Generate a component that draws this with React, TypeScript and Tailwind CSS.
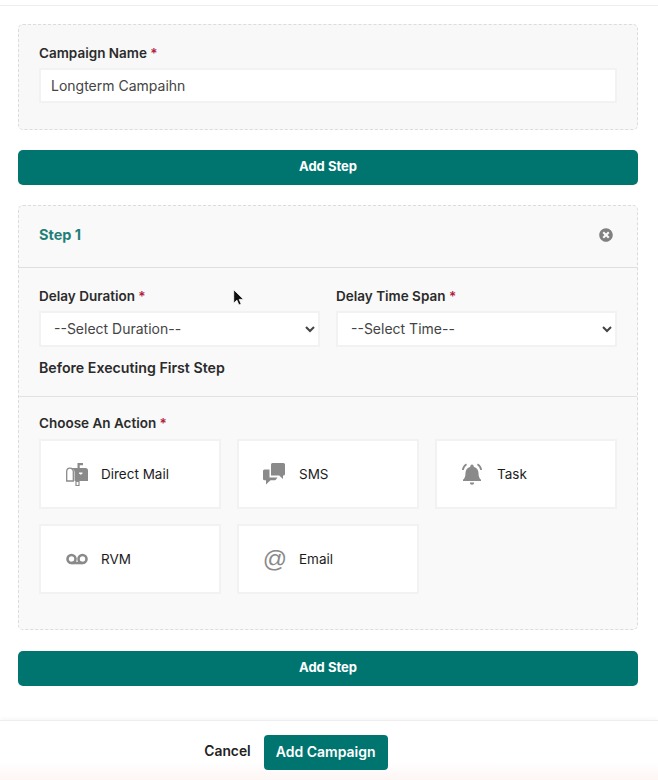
import React from "react";
import { FaTimesCircle } from "react-icons/fa";

const Star = () => <span className="text-[#b3183d]"> *</span>;

function Label({ children, required, size = "text-[13.5px]" }: { children: React.ReactNode; required?: boolean; size?: string }) {
  return (
    <div className={`${size} leading-[18px] font-semibold text-[#2b2b2b]`}>
      {children}
      {required && <Star />}
    </div>
  );
}

function AddStep({ extra = "" }: { extra?: string }) {
  return (
    <button className={`${extra} h-[35px] w-full rounded-[5px] bg-[#007570] pb-[2px] text-[13px] font-bold text-white`}>
      Add Step
    </button>
  );
}

function Mailbox() {
  return (
    <svg width="24" height="24" viewBox="0 0 24 24" className="text-[#8a8a8a]">
      <path fill="currentColor" d="M12.500 1h5.500v2.200h-3.300V6h-2.200z" />
      <path fill="currentColor" d="M6.500 6h14A2.500 2.500 0 0 1 23 8.500V19H9.500V10c0-1.800-1.200-3.300-3-4z" />
      <path fill="#fff" stroke="currentColor" strokeWidth="1.300" d="M1.700 19V9.500a3.300 3.300 0 0 1 6.600 0V19z" />
      <path fill="none" stroke="currentColor" strokeWidth="1.200" d="M11 19.500h3v4h-3z" />
      <path fill="#fff" d="M14 10.500h3.500v1l-1.750 1.200-1.750-1.200z" />
    </svg>
  );
}

function Sms() {
  return (
    <svg width="24" height="24" viewBox="0 0 24 24" className="-translate-x-[1px] text-[#8a8a8a]">
      <path fill="currentColor" d="M10.500 1h11A1.500 1.500 0 0 1 23 2.500v9.500a1.500 1.500 0 0 1-1.500 1.500H21V17l-3.800-3.500H9V2.500A1.500 1.500 0 0 1 10.500 1z" />
      <path fill="currentColor" d="M2.500 7.500H7.500V15.500H15.500L14 17.500a1.500 1.500 0 0 1-1.300.700H8.500L4 22.500V18.200H2.500A1.500 1.500 0 0 1 1 16.700V9a1.500 1.500 0 0 1 1.500-1.500z" />
    </svg>
  );
}

function Bell() {
  return (
    <svg width="24" height="24" viewBox="0 0 24 24" className="-translate-x-[1px] text-[#8a8a8a]">
      <path fill="currentColor" d="M12 2.500a1.700 1.700 0 0 1 1.700 1.700v.5c3 .8 4.800 3.300 4.800 6.300 0 3.800 1 5.300 2.500 6.800v1.200H3v-1.200c1.500-1.500 2.500-3 2.500-6.800 0-3 1.800-5.500 4.800-6.300v-.5A1.700 1.700 0 0 1 12 2.500z" />
      <path fill="currentColor" d="M9.800 20.500h4.400a2.200 2.200 0 0 1-4.400 0z" />
      <path fill="none" stroke="currentColor" strokeWidth="1.800" d="M6.500 2.200A8 8 0 0 0 2.800 8M17.500 2.200a8 8 0 0 1 3.700 5.800" />
    </svg>
  );
}

function Voicemail() {
  return (
    <svg width="24" height="12" viewBox="0 0 24 12" className="text-[#8a8a8a]">
      <circle cx="6.500" cy="6" r="4" fill="none" stroke="currentColor" strokeWidth="2.600" />
      <circle cx="17.500" cy="6" r="4" fill="none" stroke="currentColor" strokeWidth="2.600" />
      <path fill="none" stroke="currentColor" strokeWidth="2.600" d="M6.500 10.000h11" />
    </svg>
  );
}

function ActionCard({ icon, label }: { icon: React.ReactNode; label: string }) {
  return (
    <div className="flex h-[70px] items-center gap-[12px] border-2 border-[#f2f2f2] bg-white pl-[24px]">
      <span className="flex w-[24px] items-center justify-center">{icon}</span>
      <span className="text-[13.5px] text-[#1c1c1c]">{label}</span>
    </div>
  );
}

function SelectField({ label, placeholder }: { label: string; placeholder: string }) {
  return (
    <div className="flex flex-col gap-[6px]">
      <Label required>{label}</Label>
      <select className="h-[36px] w-full border-2 border-[#f2f2f2] bg-white pb-[2px] pl-[9px] text-[14px] text-[#444]">
        <option>{placeholder}</option>
      </select>
    </div>
  );
}

export default function App() {
  return (
    <div className="relative flex h-[780px] w-[658px] flex-col overflow-hidden bg-white font-['Inter','Noto_Sans',sans-serif]">
      <div className="h-[6px] shrink-0 border-b border-[#eeeeee]" />
      <main className="flex flex-col gap-[20px] pl-[18px] pr-[20px] pt-[18px]">
        <section className="h-[106px] rounded-[5px] border border-dashed border-[#dcdcdc] bg-[#f8f8f9] px-[20px] pt-[19px]">
          <Label required>Campaign Name</Label>
          <div className="mt-[6px] flex h-[35px] items-center border-2 border-[#f2f2f2] bg-white pb-[1px] pl-[10px] text-[14px] text-[#444]">
            Longterm Campaihn
          </div>
        </section>

        <AddStep />

        <section className="flex h-[425px] flex-col rounded-[5px] border border-dashed border-[#dcdcdc] bg-[#f9f9f9]">
          <header className="flex h-[62px] shrink-0 items-center justify-between border-b border-[#dfdfdf] pb-[4px] pl-[20px] pr-[24px]">
            <span className="text-[14.5px] font-bold text-[#1f7f78]">Step 1</span>
            <FaTimesCircle className="text-[14px] text-[#808080]" />
          </header>
          <div className="h-[129px] shrink-0 border-b border-[#e2e2e2] px-[20px] pt-[19px]">
            <div className="grid grid-cols-2 gap-[16px]">
              <SelectField label="Delay Duration" placeholder="--Select Duration--" />
              <SelectField label="Delay Time Span" placeholder="--Select Time--" />
            </div>
            <div className="mt-[12px]">
              <Label size="text-[14.2px]">Before Executing First Step</Label>
            </div>
          </div>
          <div className="px-[20px] pt-[17px]">
            <Label required>Choose An Action</Label>
            <div className="mt-[7px] grid grid-cols-3 gap-x-[16px] gap-y-[15px]">
              <ActionCard icon={<Mailbox />} label="Direct Mail" />
              <ActionCard icon={<Sms />} label="SMS" />
              <ActionCard icon={<Bell />} label="Task" />
              <ActionCard icon={<Voicemail />} label="RVM" />
              <ActionCard
                icon={<span className="font-['Liberation_Sans',sans-serif] text-[24px] leading-none text-[#8a8a8a]">@</span>}
                label="Email"
              />
            </div>
          </div>
        </section>

        <AddStep extra="mt-[1px]" />
      </main>

      <footer className="mt-[34px] flex flex-1 items-start justify-center gap-[13px] border-t border-[#eeeeee] bg-gradient-to-b from-white from-70% to-[#fdf6f4] pr-[66px] pt-[14px] shadow-[0_-2px_4px_rgba(0,0,0,0.03)]">
        <span className="flex h-[35px] items-center pb-[2px] text-[13.8px] font-semibold text-[#222]">Cancel</span>
        <button className="h-[35px] w-[124px] rounded-[4px] bg-[#007570] pb-[2px] text-[14px] font-semibold text-white">
          Add Campaign
        </button>
      </footer>

      <svg width="12" height="18" viewBox="0 0 12 18" className="absolute left-[233px] top-[289px]">
        <path fill="#111" stroke="#fff" strokeWidth="0.8" d="M.7.7v13.500l3.200-3 2 4.800 2.300-1-2-4.600h4.400z" />
      </svg>
    </div>
  );
}
